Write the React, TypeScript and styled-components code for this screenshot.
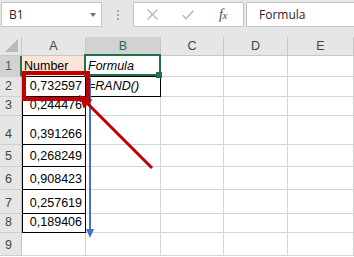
import React from 'react';
import styled, { createGlobalStyle, css } from 'styled-components';

const GlobalStyle = createGlobalStyle`
  html, body { margin: 0; padding: 0; background: #fff; }
  body { font-family: "Liberation Sans", Arial, sans-serif; }
  * { box-sizing: border-box; }
`;

const GREEN = '#217346';
const GRID = '#d4d4d4';
const HEAD_LINE = '#c6c6c6';

const Screen = styled.div`
  position: relative;
  width: 354px;
  height: 257px;
  overflow: hidden;
  background: #fff;
`;

const FormulaBar = styled.div`
  display: flex;
  align-items: flex-start;
  height: 37px;
  padding: 2px 0 0 1px;
  background: #e6e6e6;
`;

const Field = styled.div`
  height: 25px;
  background: #fff;
  border: 1px solid ${HEAD_LINE};
  display: flex;
  align-items: center;
  font-family: "Open Sans", "Liberation Sans", sans-serif;
  font-size: 12px;
  color: #262626;
  flex-shrink: 0;
`;

const NameBox = styled(Field)`
  width: 101px;
  padding-left: 7px;
  justify-content: space-between;
`;

const Caret = styled.span`
  width: 0;
  height: 0;
  margin-right: 5px;
  border-left: 3.5px solid transparent;
  border-right: 3.5px solid transparent;
  border-top: 4px solid #707070;
`;

const Grip = styled.div`
  width: 31px;
  height: 25px;
  display: flex;
  flex-direction: column;
  align-items: center;
  justify-content: center;
  gap: 2px;
  flex-shrink: 0;
`;

const Dot = styled.span`
  width: 2px;
  height: 2px;
  background: #a6a6a6;
`;

const ActionBox = styled(Field)`
  width: 111px;
`;

const ActionIcon = styled.span<{ $gap: number }>`
  display: flex;
  align-items: center;
  margin-left: ${(p) => p.$gap}px;
`;

const Fx = styled.span`
  font-family: "Liberation Serif", "Times New Roman", serif;
  font-style: italic;
  font-size: 14px;
  color: #4a4a4a;
  margin-left: 25px;
  letter-spacing: -0.5px;

  small {
    font-size: 11px;
  }
`;

const FormulaInput = styled(Field)`
  flex: 1;
  margin-left: 2px;
  margin-right: -4px;
  padding-left: 12px;
`;

const Sheet = styled.div`
  display: grid;
  grid-template-columns: 22px 64px 75px 63px 64px 66px;
  grid-template-rows: 19px 21px 20px 19px 29px 22px 23px 24px 19px 23px;
  font-family: "Liberation Sans", Arial, sans-serif;
  font-size: 12.5px;
  line-height: 15px;
`;

const HeadBase = css`
  background: #e6e6e6;
  color: #444;
  border-right: 1px solid ${HEAD_LINE};
`;

const Corner = styled.div`
  ${HeadBase};
  border-bottom: 1px solid ${HEAD_LINE};
  display: flex;
  align-items: flex-end;
  justify-content: flex-end;
  padding: 0 3px 3px 0;
`;

const ColHead = styled.div<{ $active?: boolean }>`
  ${HeadBase};
  display: flex;
  align-items: center;
  justify-content: center;
  border-bottom: 1px solid ${HEAD_LINE};
  ${(p) =>
    p.$active &&
    css`
      background: #d2d2d2;
      color: ${GREEN};
      border-bottom: 2px solid ${GREEN};
      padding-top: 1px;
    `}
`;

const RowHead = styled.div<{ $active?: boolean }>`
  ${HeadBase};
  border-bottom: 1px solid #cfcfcf;
  display: flex;
  align-items: flex-end;
  justify-content: center;
  padding: 0 4px 2px 0;
  ${(p) =>
    p.$active &&
    css`
      background: #d2d2d2;
      color: ${GREEN};
      border-right: 2px solid ${GREEN};
      padding-right: 3px;
    `}
`;

const Cell = styled.div<{
  $fill?: string;
  $italic?: boolean;
  $right?: boolean;
  $boxLeft?: boolean;
  $boxRight?: boolean;
  $boxBottom?: boolean;
}>`
  position: relative;
  display: flex;
  align-items: flex-end;
  justify-content: ${(p) => (p.$right ? 'flex-end' : 'flex-start')};
  padding: 0 3px 2px 2px;
  white-space: nowrap;
  color: #000;
  background: ${(p) => p.$fill ?? '#fff'};
  font-style: ${(p) => (p.$italic ? 'italic' : 'normal')};
  border-right: 1px solid ${(p) => (p.$boxRight ? '#000' : GRID)};
  border-bottom: 1px solid ${(p) => (p.$boxBottom ? '#000' : GRID)};
  ${(p) =>
    p.$boxLeft &&
    css`
      border-left: 1px solid #000;
    `}
`;

const Selection = styled.div`
  position: absolute;
  top: -2px;
  left: -2px;
  right: -1px;
  bottom: 0;
  border: 2px solid ${GREEN};
  z-index: 2;
  pointer-events: none;
`;

const FillHandle = styled.span`
  position: absolute;
  right: -3px;
  bottom: -4px;
  width: 6px;
  height: 6px;
  background: ${GREEN};
`;

const Annotations = styled.svg`
  position: absolute;
  left: 0;
  top: 0;
  z-index: 3;
  pointer-events: none;
`;

const values = ['0,732597', '0,244476', '0,391266', '0,268249', '0,908423', '0,257619', '0,189406'];

export default function App() {
  const rows: React.ReactNode[] = [];
  rows.push(
    <React.Fragment key="r1">
      <RowHead $active>1</RowHead>
      <Cell $fill="#fce4d6" $boxBottom>Number</Cell>
      <Cell $italic $boxBottom>
        Formula
        <Selection>
          <FillHandle />
        </Selection>
      </Cell>
      <Cell />
      <Cell />
      <Cell />
    </React.Fragment>
  );
  values.forEach((v, i) => {
    const n = i + 2;
    rows.push(
      <React.Fragment key={`r${n}`}>
        <RowHead>{n}</RowHead>
        <Cell $right $boxLeft $boxRight $boxBottom>
          {v}
        </Cell>
        {n === 2 ? (
          <Cell $italic $boxRight $boxBottom>
            =RAND()
          </Cell>
        ) : (
          <Cell />
        )}
        <Cell />
        <Cell />
        <Cell />
      </React.Fragment>
    );
  });
  rows.push(
    <React.Fragment key="r9">
      <RowHead>9</RowHead>
      <Cell />
      <Cell />
      <Cell />
      <Cell />
      <Cell />
    </React.Fragment>
  );

  return (
    <>
      <GlobalStyle />
      <Screen>
        <FormulaBar>
          <NameBox>
            B1
            <Caret />
          </NameBox>
          <Grip>
            <Dot />
            <Dot />
            <Dot />
          </Grip>
          <ActionBox>
            <ActionIcon $gap={13}>
              <svg width="11" height="11" viewBox="0 0 11 11">
                <path d="M0.5 0.5 L10.5 10.5 M10.5 0.5 L0.5 10.5" stroke="#b4b4b4" strokeWidth="1.3" fill="none" />
              </svg>
            </ActionIcon>
            <ActionIcon $gap={24}>
              <svg width="12" height="10" viewBox="0 0 12 10">
                <path d="M0.7 5.2 L4 8.8 L11.3 0.8" stroke="#b4b4b4" strokeWidth="1.3" fill="none" />
              </svg>
            </ActionIcon>
            <Fx>
              f<small>x</small>
            </Fx>
          </ActionBox>
          <FormulaInput>Formula</FormulaInput>
        </FormulaBar>
        <Sheet>
          <Corner>
            <svg width="13" height="13" viewBox="0 0 13 13">
              <polygon points="13,0 13,13 0,13" fill="#b9b9b9" />
            </svg>
          </Corner>
          <ColHead>A</ColHead>
          <ColHead $active>B</ColHead>
          <ColHead>C</ColHead>
          <ColHead>D</ColHead>
          <ColHead>E</ColHead>
          {rows}
        </Sheet>
        <Annotations width="354" height="257" viewBox="0 0 354 257">
          <line x1="90" y1="78" x2="90" y2="230" stroke="#4472c4" strokeWidth="2" />
          <polygon points="86,229 94,229 90,238" fill="#4472c4" />
          <rect x="24" y="73" width="64" height="26" fill="none" stroke="#c00000" strokeWidth="4" />
          <line x1="152" y1="168" x2="87" y2="103" stroke="#c00000" strokeWidth="3" />
          <polygon points="79,95 92.4,99.7 83.7,108.4" fill="#c00000" />
        </Annotations>
      </Screen>
    </>
  );
}
